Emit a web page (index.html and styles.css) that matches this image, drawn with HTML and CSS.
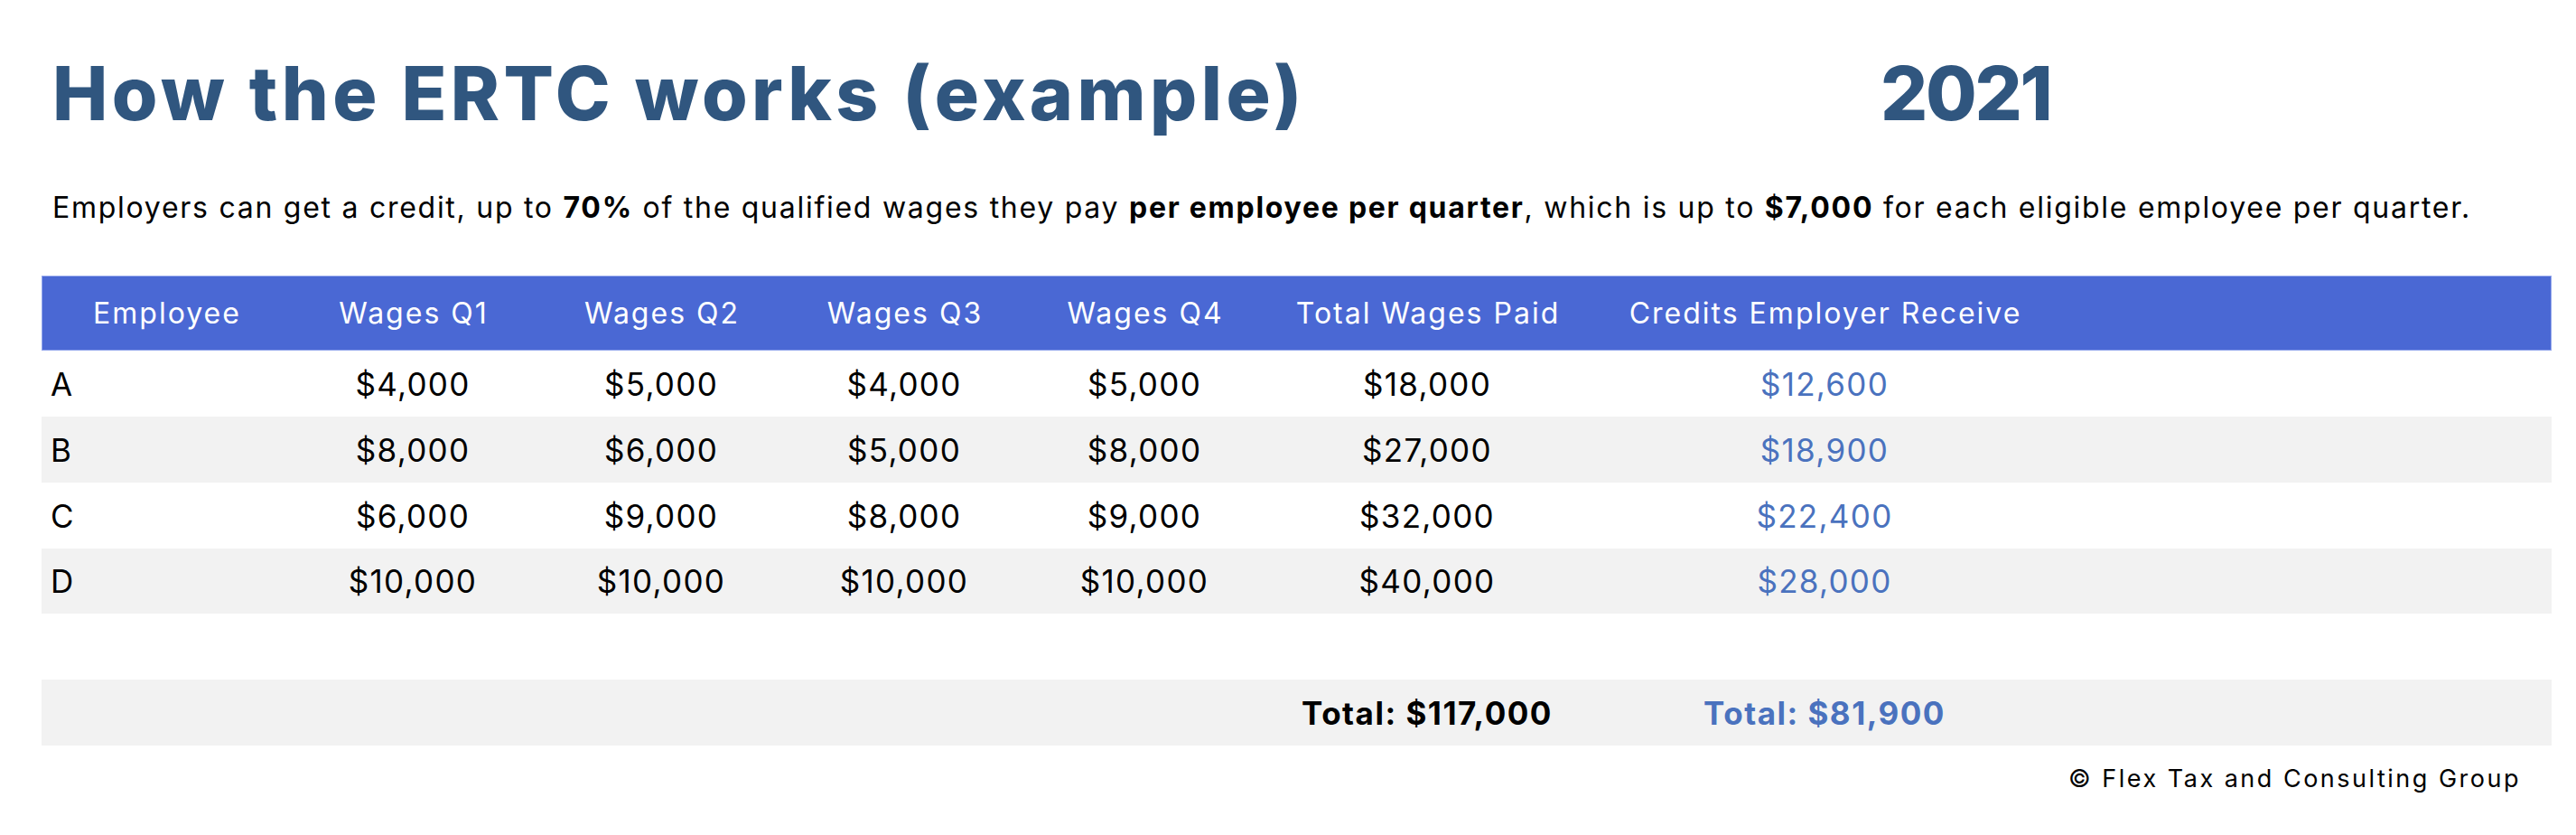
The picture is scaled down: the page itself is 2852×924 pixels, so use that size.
FILE: index.html
```html
<!DOCTYPE html>
<html lang="en">
<head>
<meta charset="utf-8">
<title>How the ERTC works (example)</title>
<link rel="stylesheet" href="styles.css">
</head>
<body>
<main class="page">
  <header class="heading">
    <h1 class="title">How the ERTC works (example)</h1>
    <div class="year">2021</div>
  </header>
  <p class="desc">Employers can get a credit, up to <b>70%</b> of the qualified wages they pay <b>per employee per quarter</b>, which is up to <b>$7,000</b> for each eligible employee per quarter.</p>
  <section class="table">
    <div class="row head">
      <div class="cell">Employee</div>
      <div class="cell">Wages Q1</div>
      <div class="cell">Wages Q2</div>
      <div class="cell">Wages Q3</div>
      <div class="cell">Wages Q4</div>
      <div class="cell">Total Wages Paid</div>
      <div class="cell">Credits Employer Receive</div>
      <div class="cell"></div>
    </div>
    <div class="row">
      <div class="cell name">A</div>
      <div class="cell">$4,000</div>
      <div class="cell">$5,000</div>
      <div class="cell">$4,000</div>
      <div class="cell">$5,000</div>
      <div class="cell">$18,000</div>
      <div class="cell credit">$12,600</div>
      <div class="cell"></div>
    </div>
    <div class="row alt">
      <div class="cell name">B</div>
      <div class="cell">$8,000</div>
      <div class="cell">$6,000</div>
      <div class="cell">$5,000</div>
      <div class="cell">$8,000</div>
      <div class="cell">$27,000</div>
      <div class="cell credit">$18,900</div>
      <div class="cell"></div>
    </div>
    <div class="row">
      <div class="cell name">C</div>
      <div class="cell">$6,000</div>
      <div class="cell">$9,000</div>
      <div class="cell">$8,000</div>
      <div class="cell">$9,000</div>
      <div class="cell">$32,000</div>
      <div class="cell credit">$22,400</div>
      <div class="cell"></div>
    </div>
    <div class="row alt last">
      <div class="cell name">D</div>
      <div class="cell">$10,000</div>
      <div class="cell">$10,000</div>
      <div class="cell">$10,000</div>
      <div class="cell">$10,000</div>
      <div class="cell">$40,000</div>
      <div class="cell credit">$28,000</div>
      <div class="cell"></div>
    </div>
    <div class="row spacer"></div>
    <div class="row alt total">
      <div class="cell"></div>
      <div class="cell"></div>
      <div class="cell"></div>
      <div class="cell"></div>
      <div class="cell"></div>
      <div class="cell">Total: $117,000</div>
      <div class="cell credit">Total: $81,900</div>
      <div class="cell"></div>
    </div>
  </section>
  <p class="copy">© Flex Tax and Consulting Group</p>
</main>
</body>
</html>
```

FILE: styles.css
```css
html, body {
  margin: 0;
  padding: 0;
  background: #ffffff;
}

body {
  font-family: Inter, "Open Sans", "Liberation Sans", sans-serif;
  color: #000000;
}

.page {
  padding: 0 27px 0 46px;
}

.heading {
  display: grid;
  grid-template-columns: 2024px auto;
  padding-left: 12px;
  margin-top: 63px;
  color: #30567f;
}

.title {
  margin: 0;
  font-size: 82px;
  line-height: 82px;
  font-weight: 800;
  letter-spacing: 4.45px;
}

.year {
  font-size: 82px;
  line-height: 82px;
  font-weight: 800;
  letter-spacing: -2.3px;
}

.desc {
  margin: 65px 0 0 12px;
  font-size: 32px;
  line-height: 40px;
  letter-spacing: 1.73px;
}

.desc b {
  font-weight: 700;
}

.table {
  margin-top: 55px;
  display: flex;
  flex-direction: column;
}

.row {
  display: grid;
  grid-template-columns: 276px 270px 280px 258px 274px 352px 528px 1fr;
  height: 73px;
  align-items: center;
  font-size: 35px;
  letter-spacing: 1.3px;
}

.row.alt {
  background: #f2f2f2;
}

.row.last {
  height: 72px;
}

.row.head {
  height: 83px;
  box-sizing: border-box;
  background: #4a68d4;
  border: 1px solid #93a6ec;
  color: #ffffff;
  font-size: 32px;
  letter-spacing: 2px;
}

.cell {
  text-align: center;
  white-space: nowrap;
}

.cell.name {
  text-align: left;
  padding-left: 10px;
}

.credit {
  color: #4a72be;
}

.row.total {
  font-weight: 700;
  letter-spacing: 1.5px;
}

.copy {
  margin: 20px 34px 0 0;
  text-align: right;
  font-size: 27px;
  line-height: 34px;
  letter-spacing: 2.5px;
}
```
